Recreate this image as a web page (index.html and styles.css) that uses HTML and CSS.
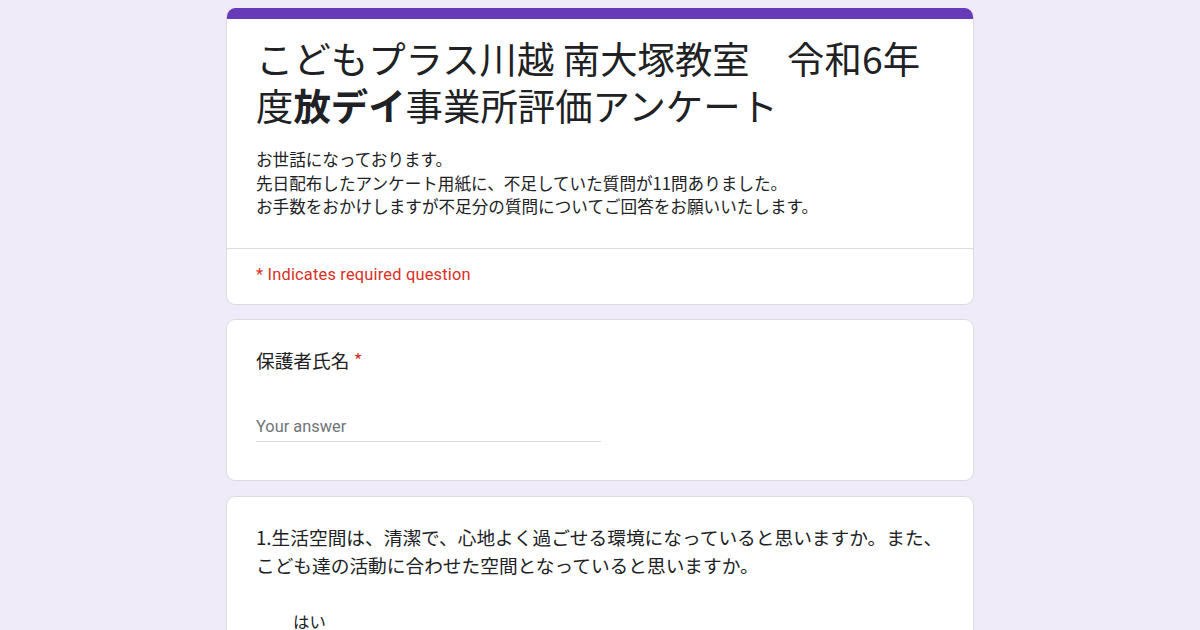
FILE: index.html
```html
<!DOCTYPE html>
<html lang="ja">
<head>
<meta charset="utf-8">
<title>こどもプラス川越 南大塚教室 アンケート</title>
<link rel="stylesheet" href="styles.css">
</head>
<body>
<main class="form">
  <section class="card header-card">
    <div class="accent"></div>
    <div class="header-body">
      <h1 class="title">こどもプラス川越 南大塚教室　令和6年度<b>放デイ</b>事業所評価アンケート</h1>
      <p class="desc">お世話になっております。<br>先日配布したアンケート用紙に、不足していた質問が11問ありました。<br>お手数をおかけしますが不足分の質問についてご回答をお願いいたします。</p>
    </div>
    <div class="required-note">* Indicates required question</div>
  </section>

  <section class="card question">
    <div class="q-title">保護者氏名 <span class="star">*</span></div>
    <div class="answer">Your answer</div>
  </section>

  <section class="card question">
    <div class="q-title">1.生活空間は、清潔で、心地よく過ごせる環境になっていると思いますか。また、こども達の活動に合わせた空間となっていると思いますか。</div>
    <div class="options">
      <div class="option">はい</div>
    </div>
  </section>
</main>
</body>
</html>
```

FILE: styles.css
```css
html, body {
  margin: 0;
  padding: 0;
}
body {
  background: #f0ebf8;
  font-family: Roboto, "Noto Sans CJK JP", sans-serif;
  color: #202124;
}
.form {
  width: 748px;
  margin: 0 auto;
  padding-top: 8px;
  display: flex;
  flex-direction: column;
  gap: 15px;
}
.card {
  background: #fff;
  border: 1px solid #dadce0;
  border-radius: 9px;
  overflow: hidden;
}
.header-card {
  border-top: none;
  margin-bottom: -1px;
}
.accent {
  height: 11px;
  background: #673ab7;
}
.header-body {
  padding: 16px 29px 29px;
  border-bottom: 1px solid #dadce0;
}
.title {
  margin: 0;
  font-size: 37.4px;
  line-height: 47px;
  font-weight: 400;
  font-family: "Noto Sans CJK JP", sans-serif;
  letter-spacing: 0;
}
.title b {
  font-weight: 700;
}
.desc {
  margin: 19px 0 0;
  font-size: 16.6px;
  line-height: 23.5px;
  font-family: "Noto Sans CJK JP", sans-serif;
}
.required-note {
  padding: 14px 29px 18px;
  font-size: 16.4px;
  line-height: 23px;
  color: #d93025;
  letter-spacing: 0.2px;
}
.question {
  padding: 26px 29px 38px;
}
.q-title {
  font-size: 18.7px;
  line-height: 28px;
  font-family: "Noto Sans CJK JP", sans-serif;
}
.star {
  color: #d93025;
}
.answer {
  margin-top: 41px;
  width: 345px;
  font-size: 16.4px;
  line-height: 24px;
  color: #70757a;
  padding-bottom: 2px;
  border-bottom: 1px solid #dadce0;
}
.options {
  margin-top: 30px;
  padding-left: 37px;
}
.option {
  font-size: 16.4px;
  line-height: 24px;
  font-family: "Noto Sans CJK JP", sans-serif;
}
```
